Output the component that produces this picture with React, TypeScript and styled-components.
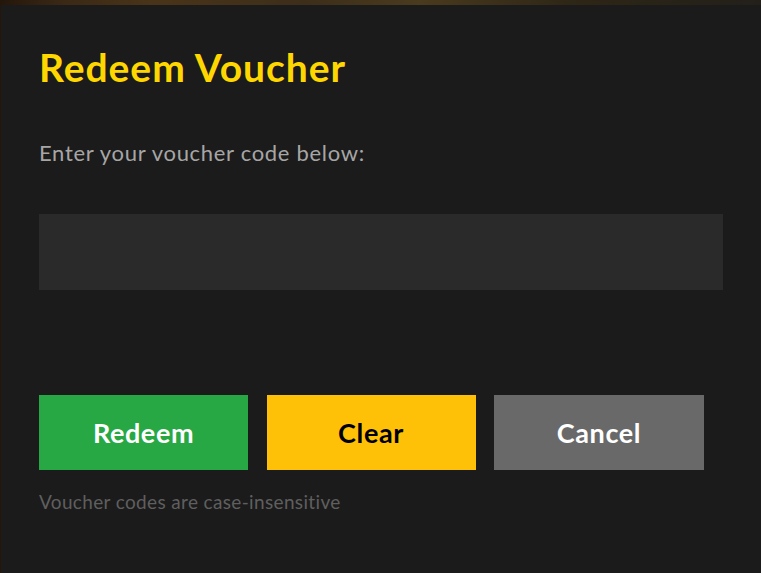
import React from "react";
import styled, { createGlobalStyle } from "styled-components";

const Global = createGlobalStyle`
  html, body {
    margin: 0;
    padding: 0;
    height: 100%;
    overflow: hidden;
  }
  body {
    background: linear-gradient(90deg, #24160b 0%, #3a2815 8%, #4a3419 20%, #3d2e1a 40%, #4a3a1e 55%, #2e2616 75%, #23201a 100%);
    font-family: Lato, "Noto Sans", sans-serif;
  }
`;

const Page = styled.div`
  padding: 5px 0 0 1px;
  min-height: 573px;
  box-sizing: border-box;
`;

const Dialog = styled.section`
  background: #1b1b1b;
  width: 760px;
  min-height: 568px;
  box-sizing: border-box;
  padding: 38px 38px;
`;

const Title = styled.h2`
  margin: 0;
  color: #ffd700;
  font-size: 39px;
  line-height: 48px;
  font-weight: 700;
  letter-spacing: 0.95px;
`;

const Label = styled.p`
  margin: 49px 0 0;
  color: #a6a6a6;
  font-size: 22px;
  line-height: 1.2;
  letter-spacing: 0.7px;
`;

const CodeInput = styled.input`
  display: block;
  margin-top: 48px;
  width: 100%;
  height: 76px;
  box-sizing: border-box;
  border: none;
  outline: none;
  background: #2a2a2a;
  color: #eee;
  font-family: inherit;
  font-size: 24px;
  padding: 0 20px;
`;

const Actions = styled.div`
  display: grid;
  grid-template-columns: 209px 209px 210px;
  gap: 18.5px;
  margin-top: 105px;
`;

const Button = styled.button<{ $bg: string; $fg: string }>`
  height: 75px;
  border: none;
  background: ${(p) => p.$bg};
  color: ${(p) => p.$fg};
  font-family: inherit;
  font-size: 27px;
  font-weight: 700;
  letter-spacing: 0.6px;
  cursor: pointer;
`;

const Hint = styled.p`
  margin: 21px 0 0;
  color: #5f5f5f;
  font-size: 19px;
  line-height: 1.2;
  letter-spacing: 0.35px;
`;

export default function App() {
  return (
    <>
      <Global />
      <Page>
        <Dialog>
          <Title>Redeem Voucher</Title>
          <Label>Enter your voucher code below:</Label>
          <CodeInput type="text" aria-label="Voucher code" />
          <Actions>
            <Button $bg="#28a745" $fg="#ffffff">Redeem</Button>
            <Button $bg="#ffc107" $fg="#000000">Clear</Button>
            <Button $bg="#696969" $fg="#ffffff">Cancel</Button>
          </Actions>
          <Hint>Voucher codes are case-insensitive</Hint>
        </Dialog>
      </Page>
    </>
  );
}
